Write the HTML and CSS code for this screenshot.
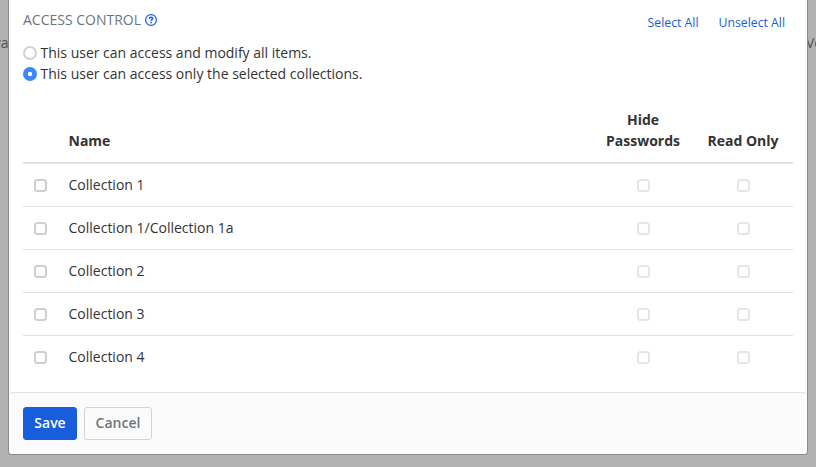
FILE: index.html
```html
<!DOCTYPE html>
<html lang="en">
<head>
<meta charset="utf-8">
<title>Access control</title>
<link rel="stylesheet" href="styles.css">
</head>
<body>
<span class="behind behind-left">va</span>
<span class="behind behind-right">Ve</span>
<main class="modal">
  <div class="modal-body">
    <header class="heading">
      <h3>ACCESS CONTROL</h3>
      <svg class="help" viewBox="0 0 12 12" aria-label="Help"><circle cx="6" cy="6" r="5.4"/><path class="mark" d="M4.3 4.8C4.5 3.8 5.2 3.3 6 3.3C7 3.3 7.6 3.8 7.6 4.6C7.6 5.6 6.1 5.6 6.1 6.8M6.1 7.8V9.3"/></svg>
      <nav class="links"><a>Select All</a><a>Unselect All</a></nav>
    </header>
    <div class="options">
      <label><i class="radio"></i><span>This user can access and modify all items.</span></label>
      <label><i class="radio checked"></i><span>This user can access only the selected collections.</span></label>
    </div>
    <div class="table">
      <div class="row head"><span></span><span>Name</span><span class="center">Hide Passwords</span><span class="center">Read Only</span></div>
      <div class="row"><i class="box"></i><span>Collection 1</span><i class="box disabled"></i><i class="box disabled"></i></div>
      <div class="row"><i class="box"></i><span>Collection 1/Collection 1a</span><i class="box disabled"></i><i class="box disabled"></i></div>
      <div class="row"><i class="box"></i><span>Collection 2</span><i class="box disabled"></i><i class="box disabled"></i></div>
      <div class="row"><i class="box"></i><span>Collection 3</span><i class="box disabled"></i><i class="box disabled"></i></div>
      <div class="row"><i class="box"></i><span>Collection 4</span><i class="box disabled"></i><i class="box disabled"></i></div>
    </div>
  </div>
  <footer class="modal-footer">
    <button class="btn primary">Save</button>
    <button class="btn secondary">Cancel</button>
  </footer>
</main>
</body>
</html>
```
FILE: styles.css
```css
* { box-sizing: border-box; }
body {
  margin: 0;
  height: 467px;
  overflow: hidden;
  position: relative;
  background: #b2b2b2;
  color: #333;
  font: 14px/21px "Open Sans", sans-serif;
}
.behind { position: absolute; top: 32px; color: #4d5256; }
.behind-left { right: 807.5px; }
.behind-right { left: 806px; }
.modal {
  position: relative;
  width: 800px;
  height: 455px;
  margin-left: 8px;
  display: flex;
  flex-direction: column;
  background: #fff;
  border: 1px solid #8c8c8c;
  border-top: 0;
  border-radius: 0 0 4px 4px;
}
.modal-body { flex: 1; padding: 9px 14px 0; }
.heading { display: flex; align-items: flex-start; height: 33px; }
.heading h3 { margin: 0; font-size: 14px; font-weight: 400; color: #6c757d; }
.help { width: 12px; height: 12px; margin: 5px 0 0 4px; fill: none; stroke: #175ddc; stroke-width: 1.2; }
.mark { stroke-width: 1.6; }
.links { margin: 4px 8px 0 auto; display: flex; gap: 20px; font-size: 12.25px; line-height: 20px; color: #175ddc; }
.options label { display: flex; align-items: center; height: 21px; gap: 4px; margin-left: -0.5px; }
.radio { width: 14px; height: 14px; border: 2px solid #d2d2d2; border-radius: 50%; }
.radio.checked { border: 0; background: radial-gradient(circle, #fff 0 1.8px, #3b87fc 2.6px); }
.table { margin-top: 15px; }
.row {
  display: grid;
  grid-template-columns: 35px 535px 100px 100px;
  align-items: center;
  height: 43px;
  border-top: 1px solid #dee2e6;
}
.row > span:nth-child(2) { padding: 0 0 2px 10.5px; }
.row.head { height: 65px; border-top: 0; border-bottom: 2px solid #dee2e6; align-items: end; padding-bottom: 11px; font-weight: 700; }
.row.head > span:nth-child(2) { padding-bottom: 0; }
.row.head + .row { height: 42px; border-top: 0; }
.center { text-align: center; padding: 0 10px; }
.box { width: 13px; height: 13px; border: 2px solid #cfcfcf; border-radius: 3.5px; justify-self: center; }
.box.disabled { border-color: #e6e6e6; }
.modal-footer {
  height: 62px;
  display: flex;
  align-items: flex-start;
  gap: 7px;
  padding: 14px;
  background: #fbfbfb;
  border-top: 1px solid #dee2e6;
  border-radius: 4px;
}
.btn { height: 33px; padding: 0 0 2px; border: 1px solid; border-radius: 3px; font: 600 14px/21px "Open Sans", sans-serif; }
.primary { width: 54px; color: #fff; background: #175ddc; border-color: #175ddc; }
.secondary { width: 68px; color: #6c757d; background: #fbfbfb; border-color: #ced4da; }
```
